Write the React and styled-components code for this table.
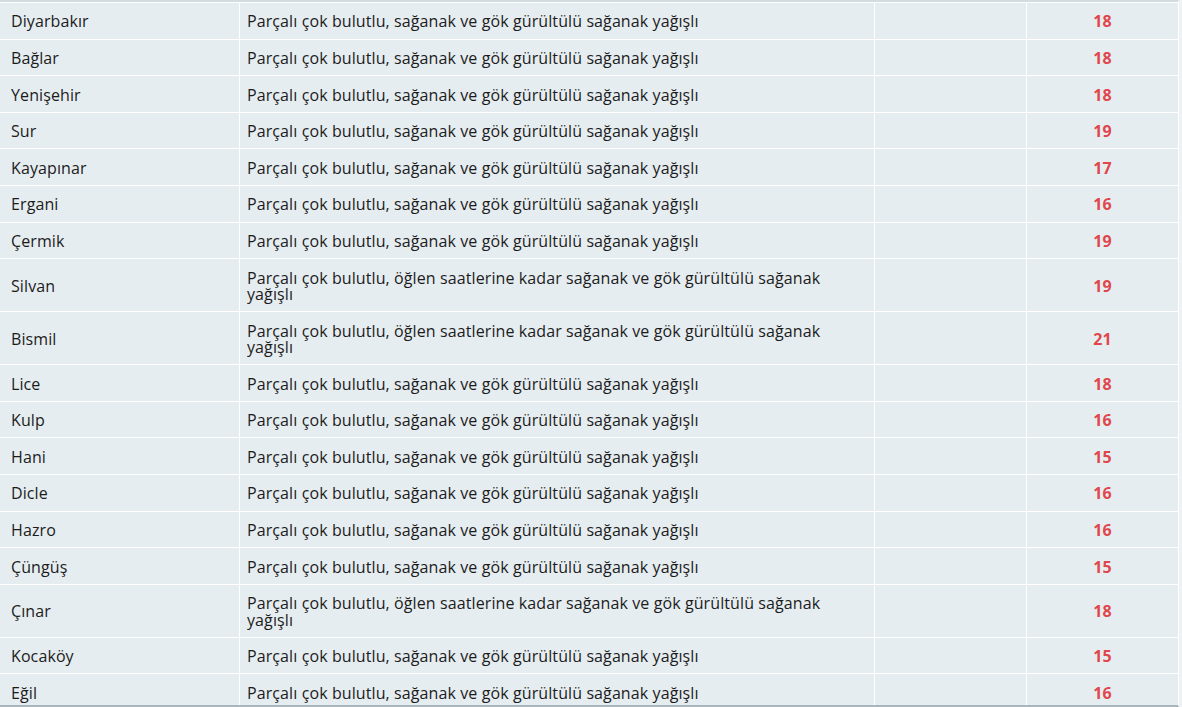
import React from "react";
import styled, { createGlobalStyle } from "styled-components";

const GlobalStyle = createGlobalStyle`
  html, body {
    margin: 0;
    padding: 0;
    background: #eef2f4;
    font-family: "Open Sans", "Liberation Sans", sans-serif;
  }
`;

const rows = [
  ["Diyarbakır", "Parçalı çok bulutlu, sağanak ve gök gürültülü sağanak yağışlı", 18],
  ["Bağlar", "Parçalı çok bulutlu, sağanak ve gök gürültülü sağanak yağışlı", 18],
  ["Yenişehir", "Parçalı çok bulutlu, sağanak ve gök gürültülü sağanak yağışlı", 18],
  ["Sur", "Parçalı çok bulutlu, sağanak ve gök gürültülü sağanak yağışlı", 19],
  ["Kayapınar", "Parçalı çok bulutlu, sağanak ve gök gürültülü sağanak yağışlı", 17],
  ["Ergani", "Parçalı çok bulutlu, sağanak ve gök gürültülü sağanak yağışlı", 16],
  ["Çermik", "Parçalı çok bulutlu, sağanak ve gök gürültülü sağanak yağışlı", 19],
  ["Silvan", "Parçalı çok bulutlu, öğlen saatlerine kadar sağanak ve gök gürültülü sağanak yağışlı", 19],
  ["Bismil", "Parçalı çok bulutlu, öğlen saatlerine kadar sağanak ve gök gürültülü sağanak yağışlı", 21],
  ["Lice", "Parçalı çok bulutlu, sağanak ve gök gürültülü sağanak yağışlı", 18],
  ["Kulp", "Parçalı çok bulutlu, sağanak ve gök gürültülü sağanak yağışlı", 16],
  ["Hani", "Parçalı çok bulutlu, sağanak ve gök gürültülü sağanak yağışlı", 15],
  ["Dicle", "Parçalı çok bulutlu, sağanak ve gök gürültülü sağanak yağışlı", 16],
  ["Hazro", "Parçalı çok bulutlu, sağanak ve gök gürültülü sağanak yağışlı", 16],
  ["Çüngüş", "Parçalı çok bulutlu, sağanak ve gök gürültülü sağanak yağışlı", 15],
  ["Çınar", "Parçalı çok bulutlu, öğlen saatlerine kadar sağanak ve gök gürültülü sağanak yağışlı", 18],
  ["Kocaköy", "Parçalı çok bulutlu, sağanak ve gök gürültülü sağanak yağışlı", 15],
  ["Eğil", "Parçalı çok bulutlu, sağanak ve gök gürültülü sağanak yağışlı", 16],
];

const Wrapper = styled.div`
  box-sizing: border-box;
  width: 1179px;
  height: 707px;
  overflow: hidden;
  border-top: 2px solid #d3dce1;
  border-bottom: 2px solid #a9b5bb;
  border-right: 1px solid #fff;
  background: #e6edf1;
  font-size: 16px;
  letter-spacing: 0.1px;
  color: #1c1c1c;
`;

const Row = styled.div`
  display: grid;
  grid-template-columns: 240px 635px 152px 151px;
  border-top: 1px solid #fff;
`;

const Cell = styled.div`
  display: flex;
  align-items: center;
  background: #e6edf1;
  border-right: 1px solid #fff;
  padding: 10.4px 7px 8.8px;
  line-height: 16.4px;
  &:last-child {
    border-right: none;
  }
`;

const NameCell = styled(Cell)`
  padding-left: 11px;
`;

const DescCell = styled(Cell)`
  padding-right: 20px;
`;

const TempCell = styled(Cell)`
  justify-content: center;
  color: #e0474c;
  font-weight: 700;
`;

export default function App() {
  return (
    <>
      <GlobalStyle />
      <Wrapper>
        {rows.map(([name, desc, temp]) => (
          <Row key={name}>
            <NameCell>{name}</NameCell>
            <DescCell>{desc}</DescCell>
            <Cell />
            <TempCell>{temp}</TempCell>
          </Row>
        ))}
      </Wrapper>
    </>
  );
}
